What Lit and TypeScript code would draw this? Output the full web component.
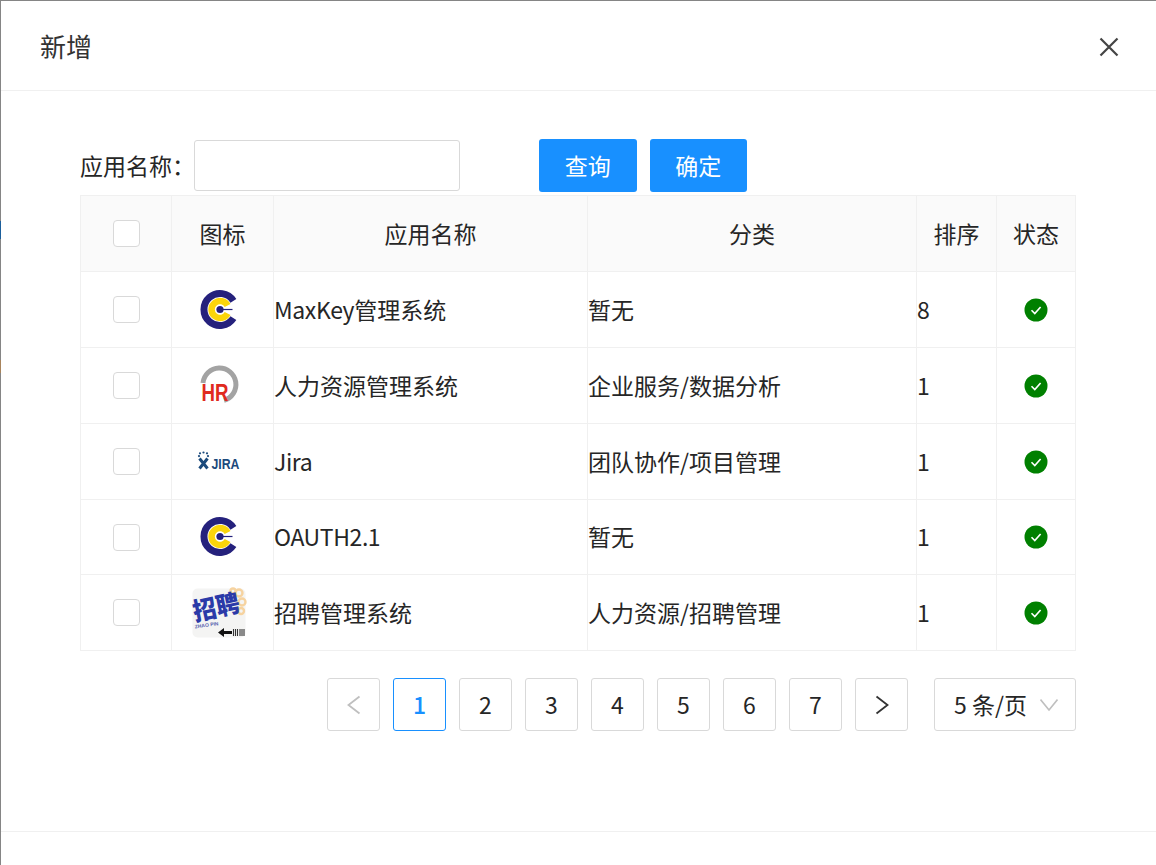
import { LitElement, html, css, svg } from 'lit';
import { customElement, state } from 'lit/decorators.js';

type AppRow = { name: string; category: string; sort: number; icon: 'c' | 'hr' | 'jira' | 'zp' };

const rows: AppRow[] = [
  { name: 'MaxKey管理系统', category: '暂无', sort: 8, icon: 'c' },
  { name: '人力资源管理系统', category: '企业服务/数据分析', sort: 1, icon: 'hr' },
  { name: 'Jira', category: '团队协作/项目管理', sort: 1, icon: 'jira' },
  { name: 'OAUTH2.1', category: '暂无', sort: 1, icon: 'c' },
  { name: '招聘管理系统', category: '人力资源/招聘管理', sort: 1, icon: 'zp' },
];

const logoC = svg`
  <g transform="translate(-3 -0.5)">
    <path d="M13.4 -8.7A16 16 0 1 0 13.4 8.7" fill="none" stroke="#25217c" stroke-width="7"/>
    <path d="M7.6 -3.9A8.5 8.5 0 1 0 7.6 3.9" fill="none" stroke="#fbd50b" stroke-width="6.5"/>
    <circle r="3.6" fill="#25217c"/>
    <path d="M0 0H12.5" stroke="#25217c" stroke-width="1.2"/>
  </g>`;

const logoHr = svg`
  <path d="M-20 -3A16.5 16.5 0 1 1 1 14.4" fill="none" stroke="#a3a3a3" stroke-width="5"/>
  <text x="-21.5" y="14.5" class="logo-text" font-size="23.5" fill="#e02a20" textLength="27" lengthAdjust="spacingAndGlyphs">HR</text>`;

const logoJira = svg`
  <g transform="translate(-5.5 -0.5)">
    <g fill="#1b4a7c">
      <circle cx="-17.5" cy="-8.2" r="1.1"/><circle cx="-14" cy="-9" r="1.1"/><circle cx="-10.5" cy="-8.2" r="1.1"/>
      <circle cx="-18.5" cy="-5.4" r="1.1"/><circle cx="-9.5" cy="-5.4" r="1.1"/>
    </g>
    <path d="M-18 -3 -10 7M-10 -3 -18 7" stroke="#1b4a7c" stroke-width="3" fill="none"/>
  </g>
  <text x="-11.5" y="6.5" class="logo-text" font-size="14" fill="#1b4a7c" textLength="28" lengthAdjust="spacingAndGlyphs">JIRA</text>`;

const logoZp = svg`
  <g transform="translate(-4 0)">
    <rect x="-26.5" y="-24.5" width="53" height="49" rx="5" fill="#f4f4f3"/>
    <g fill="none" stroke="#f6d3a0" stroke-width="2.4">
      <circle cx="20" cy="-20" r="3.5"/><circle cx="23" cy="-11" r="3.5"/><circle cx="22" cy="-2" r="3"/><circle cx="14" cy="-22" r="2.5"/>
    </g>
    <text x="-24" y="8" class="logo-zp" font-size="25" fill="#2b3aa8" transform="rotate(-12 -24 8)" textLength="47" lengthAdjust="spacingAndGlyphs">招聘</text>
    <text x="-24" y="15.5" class="logo-text" font-size="5" fill="#5a66b0" transform="rotate(-8 -24 15.5)">ZHAO PIN</text>
    <path d="M-1 19.5 5 15V18H13V21H5V24Z" fill="#111"/>
    <path d="M14.5 16V23M16.5 16V23M18.5 16V23M21 16V23M23 16V23M25 16V23" stroke="#333" stroke-width="1.1"/>
  </g>`;

@customElement('app-root')
export class AppRoot extends LitElement {
  @state() private page = 1;

  static styles = css`
    :host {
      display: block;
      position: relative;
      height: 865px;
      box-sizing: border-box;
      padding: 1px 0 0 1px;
      background: #858585;
      overflow: hidden;
      font-family: "Noto Sans CJK SC", "Noto Sans", sans-serif;
      font-size: 23px;
      color: #262626;
    }
    .bleed {
      position: absolute;
      left: 0;
      width: 1px;
    }
    .modal {
      height: 100%;
      display: flex;
      flex-direction: column;
      background: #fff;
    }
    .header {
      flex: none;
      height: 90px;
      box-sizing: border-box;
      border-bottom: 1px solid #f0f0f0;
      padding: 0 37px 0 39px;
      display: flex;
      align-items: center;
      justify-content: space-between;
    }
    .title {
      font-size: 26px;
      margin-top: -1px;
      color: #333;
    }
    .close {
      display: block;
      width: 20px;
      height: 20px;
      margin-top: 3px;
    }
    .body {
      flex: 1;
      padding: 48px 80px 0 79px;
    }
    .toolbar {
      display: flex;
      align-items: center;
      height: 53px;
      margin-bottom: 3px;
    }
    .toolbar label {
      width: 114px;
      white-space: nowrap;
      padding-bottom: 2px;
    }
    .search {
      width: 266px;
      height: 51px;
      box-sizing: border-box;
      border: 1px solid #d9d9d9;
      border-radius: 3px;
      margin-right: 79px;
    }
    .btn {
      height: 53px;
      width: 97.5px;
      box-sizing: border-box;
      padding-bottom: 2px;
      margin-right: 13px;
      border-radius: 3px;
      background: #1890ff;
      color: #fff;
      display: flex;
      align-items: center;
      justify-content: center;
    }
    table {
      table-layout: fixed;
      width: 996px;
      border-collapse: separate;
      border-spacing: 0;
      border-top: 1px solid #f0f0f0;
      border-left: 1px solid #f0f0f0;
    }
    th, td {
      box-sizing: border-box;
      height: 76px;
      border-right: 1px solid #f0f0f0;
      border-bottom: 1px solid #f0f0f0;
      padding: 0;
      font-weight: 400;
      text-align: left;
      white-space: nowrap;
    }
    tbody tr:nth-child(4) td {
      height: 75px;
    }
    th {
      background: #fafafa;
      text-align: center;
    }
    .t {
      padding-bottom: 2px;
    }
    .latin {
      letter-spacing: -0.4px;
    }
    .check {
      display: block;
      width: 27px;
      height: 27px;
      box-sizing: border-box;
      border: 1px solid #d9d9d9;
      border-radius: 4px;
      background: #fff;
      margin: 0 auto;
    }
    .logo {
      display: block;
      width: 60px;
      height: 56px;
      margin: 0 auto;
      overflow: visible;
    }
    .logo-text {
      font-family: "Liberation Sans", sans-serif;
      font-weight: 700;
    }
    .logo-zp {
      font-family: "Noto Sans CJK SC", sans-serif;
      font-weight: 900;
    }
    .status {
      display: block;
      width: 24px;
      height: 24px;
      margin: 0 auto;
    }
    .pager {
      display: flex;
      justify-content: flex-end;
      align-items: center;
      gap: 13px;
      margin-top: 27px;
    }
    .item {
      width: 53px;
      height: 53px;
      box-sizing: border-box;
      border: 1px solid #d9d9d9;
      border-radius: 3px;
      display: flex;
      align-items: center;
      justify-content: center;
    }
    .item.num {
      padding-bottom: 2px;
    }
    .item.active {
      border-color: #1890ff;
      color: #1890ff;
      font-weight: 500;
    }
    .item svg {
      width: 20px;
      height: 20px;
    }
    .size {
      width: 142px;
      height: 53px;
      box-sizing: border-box;
      margin-left: 13px;
      border: 1px solid #d9d9d9;
      border-radius: 3px;
      padding: 0 17px 2px 19px;
      display: flex;
      align-items: center;
      justify-content: space-between;
    }
    .size svg {
      width: 18px;
      height: 18px;
      margin-top: 2px;
    }
    .footer {
      flex: none;
      height: 33px;
      border-top: 1px solid #f0f0f0;
    }
  `;

  private logo(icon: AppRow['icon']) {
    const art = { c: logoC, hr: logoHr, jira: logoJira, zp: logoZp }[icon];
    return html`<svg class="logo" viewBox="-30 -28 60 56">${art}</svg>`;
  }

  // latin part of a name is set slightly tighter than the CJK part
  private name(text: string) {
    return text
      .split(/([\x00-\x7f]+)/)
      .filter(Boolean)
      .map((part) => (/^[\x00-\x7f]/.test(part) ? html`<span class="latin">${part}</span>` : part));
  }

  private row(r: AppRow) {
    return html`
      <tr>
        <td><span class="check"></span></td>
        <td>${this.logo(r.icon)}</td>
        <td class="t">${this.name(r.name)}</td>
        <td class="t">${r.category}</td>
        <td class="t">${r.sort}</td>
        <td>
          <svg class="status" viewBox="0 0 24 24">
            <circle cx="12" cy="12" r="11.5" fill="#008000"/>
            <path d="M7.5 12.3 10.8 15.6 16.6 9" fill="none" stroke="#fff" stroke-width="1.6"/>
          </svg>
        </td>
      </tr>
    `;
  }

  render() {
    return html`
      <span class="bleed" style="top:221px;height:18px;background:#1c5f9c"></span>
      <span class="bleed" style="top:360px;height:13px;background:#a8845c"></span>
      <div class="modal">
        <div class="header">
          <span class="title">新增</span>
          <svg class="close" viewBox="0 0 20 20">
            <path d="M1.5 1.5 18.5 18.5M18.5 1.5 1.5 18.5" stroke="#444" stroke-width="2.2" fill="none"/>
          </svg>
        </div>
        <div class="body">
          <div class="toolbar">
            <label>应用名称：</label>
            <div class="search"></div>
            <div class="btn">查询</div>
            <div class="btn">确定</div>
          </div>
          <table>
            <colgroup>
              <col style="width:91px" /><col style="width:102px" /><col style="width:314px" />
              <col style="width:329px" /><col style="width:80px" /><col style="width:79px" />
            </colgroup>
            <thead>
              <tr>
                <th><span class="check"></span></th>
                <th class="t">图标</th>
                <th class="t">应用名称</th>
                <th class="t">分类</th>
                <th class="t">排序</th>
                <th class="t">状态</th>
              </tr>
            </thead>
            <tbody>${rows.map((r) => this.row(r))}</tbody>
          </table>
          <div class="pager">
            <div class="item">
              <svg viewBox="0 0 20 20"><path d="M15.5 1.5 4.5 10 15.5 18.5" fill="none" stroke="#bfbfbf" stroke-width="1.8"/></svg>
            </div>
            ${[1, 2, 3, 4, 5, 6, 7].map(
              (n) => html`<div class="item num ${n === this.page ? 'active' : ''}">${n}</div>`
            )}
            <div class="item">
              <svg viewBox="0 0 20 20"><path d="M4.5 1.5 15.5 10 4.5 18.5" fill="none" stroke="#333" stroke-width="1.8"/></svg>
            </div>
            <div class="size">
              <span>5 条/页</span>
              <svg viewBox="0 0 18 18"><path d="M0.5 3.5 9 14 17.5 3.5" fill="none" stroke="#bfbfbf" stroke-width="1.6"/></svg>
            </div>
          </div>
        </div>
        <div class="footer"></div>
      </div>
    `;
  }
}
